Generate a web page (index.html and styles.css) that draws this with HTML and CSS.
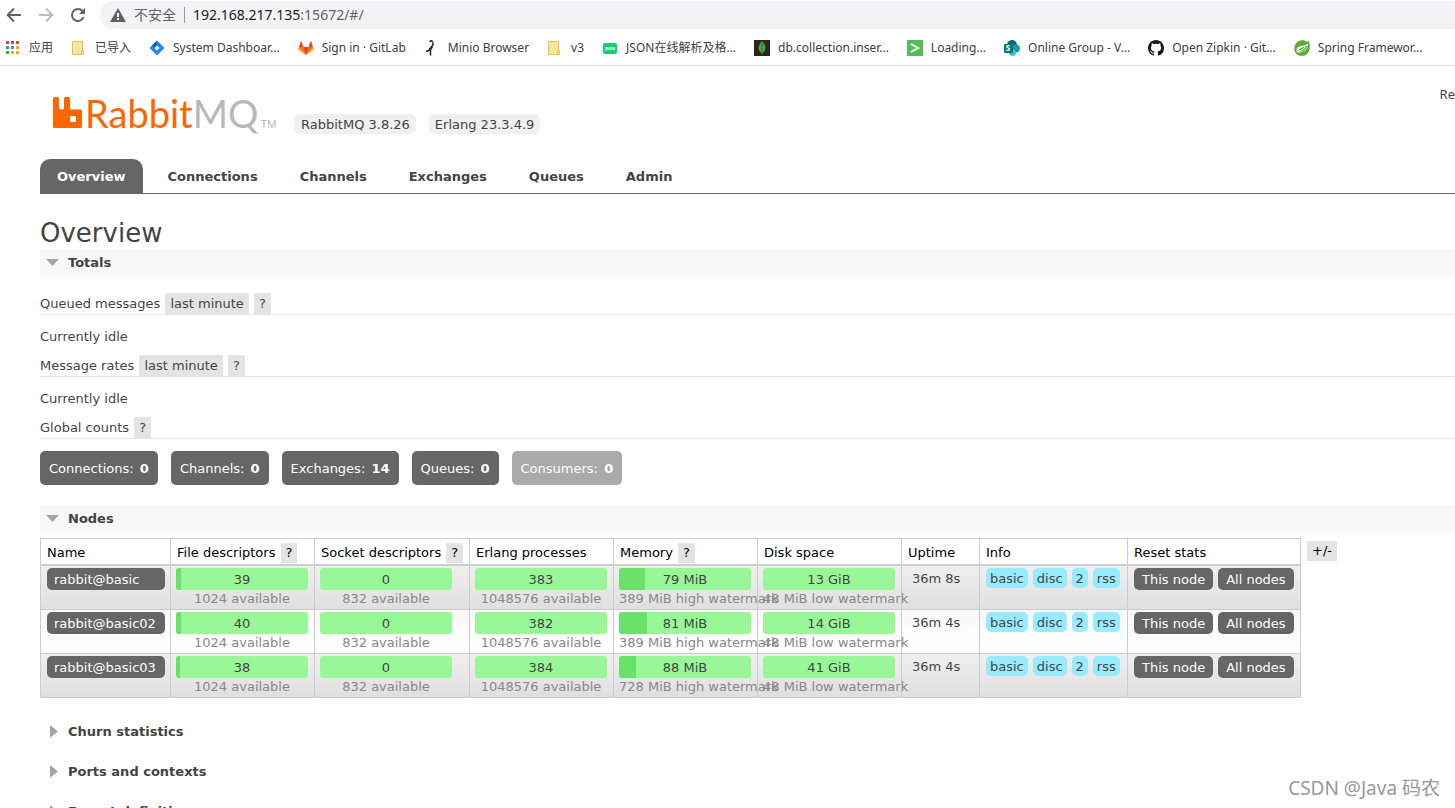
FILE: index.html
```html
<!DOCTYPE html>
<html lang="en">
<head>
    <meta charset="UTF-8">
    <meta name="viewport" content="width=device-width, initial-scale=1.0">
    <title>RabbitMQ Management</title>
    <link rel="stylesheet" href="styles.css">
</head>
<body>
    <div class="browser">
        <div class="toolbar">
            <button class="nav-button" aria-label="Back"><svg width="16" height="16" viewBox="0 0 16 16"><path d="M15 8H2M8 1.500L1.700 8L8 14.500" fill="none" stroke="#5f6368" stroke-width="2"/></svg></button>
            <button class="nav-button" aria-label="Forward"><svg width="16" height="16" viewBox="0 0 16 16"><path d="M1 8h13M8 1.500L14.300 8L8 14.500" fill="none" stroke="#babcbe" stroke-width="2"/></svg></button>
            <button class="nav-button" aria-label="Reload"><svg width="16" height="16" viewBox="0 0 16 16"><path d="M13.500 10.200A6 6 0 1 1 12.500 4" fill="none" stroke="#5f6368" stroke-width="2"/><path d="M15 1v6H9z" fill="#5f6368"/></svg></button>
            <div class="address">
                <svg width="16" height="14" viewBox="0 0 16 14"><path d="M8 0l8 14H0z" fill="#5f6368"/><path d="M7 5h2v4H7zM7 10h2v2H7z" fill="#f1f3f4"/></svg>
                <span class="insecure">不安全</span>
                <span class="url">192.168.217.135<span class="port">:15672/#/</span></span>
            </div>
        </div>
        <div class="bookmarks">
            <a class="bookmark" href="#"><svg width="16" height="16" viewBox="0 0 16 16"><path d="M1 1h3v3H1zM6 1h3v3H6zM11 1h3v3h-3z" fill="#ea4335"/><path d="M1 6h3v3H1zM1 11h3v3H1z" fill="#34a853"/><path d="M6 6h3v3H6z" fill="#4285f4"/><path d="M11 6h3v3h-3zM6 11h3v3H6zM11 11h3v3h-3z" fill="#fbab05"/></svg>应用</a>
            <a class="bookmark" href="#"><svg width="16" height="16" viewBox="0 0 16 16"><path d="M1.500 1.500h10v9h1v4h-11z" fill="#ffe594" stroke="#e8c252"/><path d="M10.500 14v-3.500h1" fill="none" stroke="#e8c252"/></svg>已导入</a>
            <a class="bookmark" href="#"><svg width="16" height="16" viewBox="0 0 16 16"><path d="M8 0.500L15.500 8L8 15.500L.5 8z" fill="#2684ff"/><path d="M8 .5v5L5.500 8L3 5.500z" fill="#0b5cd8"/><path d="M8 5.500L10.500 8L8 10.500L5.500 8z" fill="#fff"/></svg>System Dashboar...</a>
            <a class="bookmark" href="#"><svg width="16" height="16" viewBox="0 0 16 16"><path d="M8 15L.3 9.200L3 1l2.300 6h5.400L13 1l2.700 8.200z" fill="#fc6d26"/><path d="M8 15L5.300 7h5.400z" fill="#e24329"/><path d="M3 1L1.300 7h4zM13 1l1.700 6h-4z" fill="#e24329"/><path d="M8 15L.3 9.200L1.300 7zM8 15l7.700-5.800l-1-2.200z" fill="#fca326"/></svg>Sign in · GitLab</a>
            <a class="bookmark" href="#"><svg width="16" height="16" viewBox="0 0 16 16"><path d="M6 2C6 0 9 .5 8.500 2.500L9 5L5 9.500M8.500 7L6 10L2 11.500M6.500 9.500V15.500" fill="none" stroke="#222" stroke-width="1.500"/><path d="M8.500 1l1.500 4" fill="none" stroke="#d98272"/></svg>Minio Browser</a>
            <a class="bookmark" href="#"><svg width="16" height="16" viewBox="0 0 16 16"><path d="M1.500 1.500h10v9h1v4h-11z" fill="#ffe594" stroke="#e8c252"/><path d="M10.500 14v-3.500h1" fill="none" stroke="#e8c252"/></svg>v3</a>
            <a class="bookmark" href="#"><svg width="16" height="16" viewBox="0 0 16 16"><rect x="1" y="3" width="14" height="11" rx="2" fill="#16ce70"/><text class="json-mark" x="8" y="10" text-anchor="middle">JSON</text></svg>JSON在线解析及格...</a>
            <a class="bookmark" href="#"><svg width="16" height="16" viewBox="0 0 16 16"><path d="M0 0h16v16H0z" fill="#35231b"/><path d="M8 1C3 6 4 11 8 13.500C12 11 13 6 8 1z" fill="#3fa94b"/><path d="M8 1v14" stroke="#1d7134"/></svg>db.collection.inser...</a>
            <a class="bookmark" href="#"><svg width="16" height="16" viewBox="0 0 16 16"><path d="M0 0h16v16H0z" fill="#57bd5a"/><path d="M4 4l7 4l-7 4" fill="none" stroke="#fff" stroke-width="2"/></svg>Loading...</a>
            <a class="bookmark" href="#"><svg width="16" height="16" viewBox="0 0 16 16"><circle cx="8" cy="5" r="5" fill="#036c70"/><circle cx="12" cy="8.500" r="4" fill="#1a9ba1"/><circle cx="8.500" cy="12.500" r="3.500" fill="#37c6d0"/><rect y="4" width="9" height="9" rx="1" fill="#03787c"/><text class="share-mark" x="4" y="11" text-anchor="middle">S</text></svg>Online Group - V...</a>
            <a class="bookmark" href="#"><svg width="16" height="16" viewBox="0 0 16 16"><path fill="#191717" d="M8 0C3.580 0 0 3.580 0 8c0 3.540 2.290 6.530 5.470 7.590.4.070.55-.17.55-.38v-1.490c-2.010.37-2.530-.49-2.690-.94-.09-.23-.48-.94-.82-1.130-.28-.15-.68-.52-.01-.53.63-.01 1.080.58 1.230.82.72 1.210 1.870.87 2.330.66.07-.52.28-.87.51-1.070-1.780-.2-3.640-.89-3.640-3.950 0-.87.31-1.590.82-2.150-.08-.2-.36-1.020.08-2.120 0 0 .67-.21 2.200.82a7.400 7.400 0 0 1 4 0c1.530-1.040 2.200-.82 2.200-.82.44 1.100.16 1.920.08 2.120.51.56.82 1.270.82 2.150 0 3.070-1.870 3.750-3.650 3.950.29.25.54.73.54 1.480v2.200c0 .21.15.46.55.38A8 8 0 0 0 16 8c0-4.420-3.580-8-8-8z"/></svg>Open Zipkin · Git...</a>
            <a class="bookmark" href="#"><svg width="16" height="16" viewBox="0 0 16 16"><path d="M14.500 0.500C17 6 16 12 12.500 14.500C9 17 4 16 2 13.500C-1 10 0 4 4 1.500C7-.5 11 0 13 2z" fill="#5fad36"/><path d="M14 3.500C11 7 3 4.500 2.500 10C2.500 11 3 12 3.500 12.500C9 12.500 14 10 14 3.500z" fill="#fff"/><path d="M13.500 5C11 8 5.500 6.500 4 11.500C9 12 12.500 10 13.500 5z" fill="#5fad36"/><path d="M4 11.500C7 10.500 10 9 11.500 7" fill="none" stroke="#fff"/></svg>Spring Framewor...</a>
        </div>
    </div>

    <div class="header">
        <div class="logo">
            <svg width="30" height="32" viewBox="0 0 30 32"><path d="M1.500 0H4.500q1.500 0 1.500 1.500V11q0 1.500 1.500 1.500h2q1.500 0 1.500-1.500V1.500Q11 0 12.500 0H15.500q1.500 0 1.500 1.500V11q0 1.500 1.500 1.500h9Q29 12.500 29 14v15.500q0 1.500-1.500 1.500h-26Q0 31 0 29.500v-28Q0 0 1.500 0z" fill="#f60"/><rect x="17" y="19" width="6" height="6" rx="1.500" fill="#fff"/></svg>
            <span class="logo-text">Rabbit<span class="logo-mq">MQ</span></span>
            <span class="logo-tm">TM</span>
        </div>
        <div class="versions">
            <span class="version">RabbitMQ 3.8.26</span>
            <span class="version">Erlang 23.3.4.9</span>
        </div>
        <div class="refresh">Re</div>
    </div>

    <div class="menu">
        <a class="tab selected" href="#">Overview</a>
        <a class="tab" href="#">Connections</a>
        <a class="tab" href="#">Channels</a>
        <a class="tab" href="#">Exchanges</a>
        <a class="tab" href="#">Queues</a>
        <a class="tab" href="#">Admin</a>
    </div>

    <div class="main">
        <h1>Overview</h1>
        <h2 class="section open"><svg width="13" height="7" viewBox="0 0 13 7"><path d="M0 0h13L6.500 7z" fill="#a5a5a5"/></svg>Totals</h2>
        <div class="totals">
            <h3>Queued messages <button class="popup">last minute</button> <button class="popup">?</button></h3>
            <p class="idle">Currently idle</p>
            <h3>Message rates <button class="popup">last minute</button> <button class="popup">?</button></h3>
            <p class="idle">Currently idle</p>
            <h3>Global counts <button class="popup">?</button></h3>
            <div class="counts">
                <a class="count" href="#">Connections: <b>0</b></a>
                <a class="count" href="#">Channels: <b>0</b></a>
                <a class="count" href="#">Exchanges: <b>14</b></a>
                <a class="count" href="#">Queues: <b>0</b></a>
                <span class="count disabled">Consumers: <b>0</b></span>
            </div>
        </div>

        <h2 class="section open"><svg width="13" height="7" viewBox="0 0 13 7"><path d="M0 0h13L6.500 7z" fill="#a5a5a5"/></svg>Nodes</h2>
        <div class="nodes">
            <table class="list">
                <colgroup>
                    <col class="col-name"><col class="col-bar"><col class="col-socket"><col class="col-bar"><col class="col-bar"><col class="col-bar"><col class="col-uptime"><col class="col-info"><col class="col-reset">
                </colgroup>
                <thead>
                    <tr>
                        <th>Name</th>
                        <th>File descriptors <button class="popup">?</button></th>
                        <th>Socket descriptors <button class="popup">?</button></th>
                        <th>Erlang processes</th>
                        <th>Memory <button class="popup">?</button></th>
                        <th>Disk space</th>
                        <th>Uptime</th>
                        <th>Info</th>
                        <th>Reset stats</th>
                    </tr>
                </thead>
                <tbody>
                    <tr>
                        <td><a class="node" href="#">rabbit@basic</a></td>
                        <td><div class="bar"><div class="fill" style="width: 4%"></div><span>39</span></div><div class="sub">1024 available</div></td>
                        <td><div class="bar"><span>0</span></div><div class="sub">832 available</div></td>
                        <td><div class="bar"><span>383</span></div><div class="sub">1048576 available</div></td>
                        <td><div class="bar"><div class="fill" style="width: 20%"></div><span>79 MiB</span></div><div class="sub">389 MiB high watermark</div></td>
                        <td><div class="bar"><span>13 GiB</span></div><div class="sub">48 MiB low watermark</div></td>
                        <td class="uptime">36m 8s</td>
                        <td><div class="group"><span class="info">basic</span><span class="info">disc</span><span class="info">2</span><span class="info">rss</span></div></td>
                        <td><div class="group"><button class="reset">This node</button><button class="reset">All nodes</button></div></td>
                    </tr>
                    <tr class="alt">
                        <td><a class="node" href="#">rabbit@basic02</a></td>
                        <td><div class="bar"><div class="fill" style="width: 4%"></div><span>40</span></div><div class="sub">1024 available</div></td>
                        <td><div class="bar"><span>0</span></div><div class="sub">832 available</div></td>
                        <td><div class="bar"><span>382</span></div><div class="sub">1048576 available</div></td>
                        <td><div class="bar"><div class="fill" style="width: 21%"></div><span>81 MiB</span></div><div class="sub">389 MiB high watermark</div></td>
                        <td><div class="bar"><span>14 GiB</span></div><div class="sub">48 MiB low watermark</div></td>
                        <td class="uptime">36m 4s</td>
                        <td><div class="group"><span class="info">basic</span><span class="info">disc</span><span class="info">2</span><span class="info">rss</span></div></td>
                        <td><div class="group"><button class="reset">This node</button><button class="reset">All nodes</button></div></td>
                    </tr>
                    <tr>
                        <td><a class="node" href="#">rabbit@basic03</a></td>
                        <td><div class="bar"><div class="fill" style="width: 3%"></div><span>38</span></div><div class="sub">1024 available</div></td>
                        <td><div class="bar"><span>0</span></div><div class="sub">832 available</div></td>
                        <td><div class="bar"><span>384</span></div><div class="sub">1048576 available</div></td>
                        <td><div class="bar"><div class="fill" style="width: 13%"></div><span>88 MiB</span></div><div class="sub">728 MiB high watermark</div></td>
                        <td><div class="bar"><span>41 GiB</span></div><div class="sub">48 MiB low watermark</div></td>
                        <td class="uptime">36m 4s</td>
                        <td><div class="group"><span class="info">basic</span><span class="info">disc</span><span class="info">2</span><span class="info">rss</span></div></td>
                        <td><div class="group"><button class="reset">This node</button><button class="reset">All nodes</button></div></td>
                    </tr>
                </tbody>
            </table>
            <button class="popup columns">+/-</button>
        </div>

        <div class="closed-sections">
            <h2 class="section"><svg width="13" height="15" viewBox="0 0 13 15"><path d="M4 0l8 6.500L4 13z" fill="#a5a5a5"/></svg>Churn statistics</h2>
            <h2 class="section"><svg width="13" height="15" viewBox="0 0 13 15"><path d="M4 0l8 6.500L4 13z" fill="#a5a5a5"/></svg>Ports and contexts</h2>
            <h2 class="section"><svg width="13" height="15" viewBox="0 0 13 15"><path d="M4 0l8 6.500L4 13z" fill="#a5a5a5"/></svg>Export definitions</h2>
        </div>
    </div>
    <div class="watermark">CSDN @Java 码农</div>
</body>
</html>
```
FILE: styles.css
```css
* {
    box-sizing: border-box;
}
body {
    margin: 0;
    height: 100vh;
    overflow: hidden;
    position: relative;
    background: #fff;
    color: #444;
    font-family: "DejaVu Sans", "Noto Sans CJK SC", sans-serif;
    font-size: 13px;
    line-height: 20px;
}
button {
    font: inherit;
    color: inherit;
    border: none;
    padding: 0;
    cursor: pointer;
}
a {
    color: inherit;
    text-decoration: none;
}
svg {
    flex: none;
    display: block;
}

/* browser chrome */
.browser {
    font-family: "Noto Sans", "Noto Sans CJK SC", sans-serif;
    border-bottom: 1px solid #d9dbde;
}
.toolbar {
    display: flex;
    align-items: center;
    gap: 16px;
    height: 29px;
    padding: 1px 0 0 6px;
}
.nav-button {
    background: transparent;
}
.address {
    flex: 1;
    display: flex;
    align-items: center;
    gap: 8px;
    height: 28px;
    margin-left: -2px;
    padding-left: 10px;
    border-radius: 14px 0 0 14px;
    background: #f1f3f4;
    font-size: 14px;
}
.insecure {
    color: #5f6368;
    line-height: 16px;
    padding-right: 8px;
    border-right: 1px solid #9aa0a6;
}
.url {
    color: #202124;
}
.port {
    color: #5f6368;
}
.bookmarks {
    display: flex;
    gap: 18px;
    height: 36px;
    padding: 1px 0 0 5px;
    font-size: 12px;
    color: #3c4043;
}
.bookmark {
    display: flex;
    align-items: center;
    gap: 8px;
    white-space: nowrap;
}
.json-mark {
    font-size: 4px;
    font-weight: bold;
    fill: #fff;
}
.share-mark {
    font-size: 8px;
    font-weight: bold;
    fill: #fff;
}

/* header */
.header {
    display: flex;
    align-items: flex-start;
    height: 93px;
    padding-left: 53px;
}
.logo {
    display: flex;
    align-items: flex-start;
    width: 242px;
    padding-top: 31px;
    color: #f60;
}
.logo-text {
    font-family: Lato, sans-serif;
    font-size: 38px;
    line-height: 32px;
    margin-left: 2px;
}
.logo-mq {
    color: #b8b8b8;
}
.logo-tm {
    font-family: "Liberation Sans", sans-serif;
    font-size: 11px;
    line-height: 12px;
    color: #b8b8b8;
    margin: 21px 0 0 2px;
}
.versions {
    display: flex;
    gap: 13px;
    padding-top: 48px;
}
.version {
    padding: 1px 6px 0;
    line-height: 19px;
    border-radius: 5px;
    background: #f0f0f0;
}
.refresh {
    margin-left: auto;
    padding-top: 18px;
    font-family: "Noto Sans", sans-serif;
}

.menu {
    display: flex;
    gap: 8px;
    height: 35px;
    margin-left: 40px;
    border-bottom: 1px solid #666;
    font-weight: bold;
}
.tab {
    padding: 8px 17px 6px;
}
.tab.selected {
    background: #666;
    color: #fff;
    border-radius: 10px 10px 0 0;
}

/* content */
.main {
    padding: 22px 0 0 40px;
}
h1 {
    margin: 0;
    padding-top: 2px;
    font-size: 26px;
    font-weight: normal;
    line-height: 31px;
}
.section {
    display: flex;
    align-items: center;
    gap: 9px;
    height: 27px;
    margin: 0;
    padding-left: 6px;
    font-size: 13px;
}
.section.open {
    background: #f8f8f8;
}
.totals {
    padding: 17px 0 20px;
}
h3 {
    margin: 0 0 12px;
    font-size: 13px;
    font-weight: normal;
    line-height: 21px;
    border-bottom: 1px solid #e4e4e4;
}
.popup {
    margin-left: 1px;
    padding: 0 5px;
    background: #e4e4e4;
    vertical-align: top;
}
.idle {
    margin: 0 0 8px;
}
.counts {
    display: flex;
    gap: 13px;
}
.count {
    padding: 8px 9px 6px;
    border-radius: 5px;
    background: #666;
    color: #fff;
}
.count b {
    margin-left: 2px;
}
.count.disabled {
    background: #aaa;
}

.nodes {
    display: flex;
    align-items: flex-start;
    gap: 6px;
    padding-top: 6px;
}
.list {
    table-layout: fixed;
    width: 1261px;
    border-collapse: collapse;
}
.col-name {
    width: 130px;
}
.col-bar {
    width: 144px;
}
.col-socket {
    width: 155px;
}
.col-uptime {
    width: 78px;
}
.col-info {
    width: 148px;
}
.col-reset {
    width: 173px;
}
.list th {
    height: 26px;
    padding: 4px 5px 0 6px;
    border: 1px solid #ccc;
    border-bottom: 2px solid #ccc;
    color: #000;
    font-weight: normal;
    text-align: left;
    white-space: nowrap;
}
.list td {
    height: 44px;
    padding: 2px 5px 1px;
    border: 1px solid #ccc;
    vertical-align: top;
    white-space: nowrap;
}
.list tbody tr {
    background: linear-gradient(#f0f0f0, #dfdfdf);
}
.list tbody .alt {
    background: linear-gradient(#f8f8f8, #fff);
}
.node {
    display: block;
    margin-left: 1px;
    padding: 2px 7px 0;
    border-radius: 5px;
    background: #666;
    color: #fff;
}
.bar {
    display: flex;
    justify-content: center;
    position: relative;
    width: 132px;
    height: 22px;
    padding-top: 2px;
    line-height: 20px;
    border-radius: 3px;
    background: #98f898;
    overflow: hidden;
}
.bar span {
    position: relative;
}
.fill {
    position: absolute;
    inset: 0 auto 0 0;
    background: #6ae26a;
}
.sub {
    width: 132px;
    line-height: 18px;
    color: #888;
    text-align: center;
}
.list .uptime {
    padding: 3px 5px 0 10px;
}
.group {
    display: flex;
    align-items: flex-start;
    gap: 5px;
    padding-left: 1px;
}
.info {
    padding: 1px 4px 0;
    line-height: 19px;
    border-radius: 5px;
    background: #99ebff;
}
.reset {
    padding: 2px 8px 0;
    border-radius: 5px;
    background: #666;
    color: #fff;
}
.columns {
    margin: 3px 0 0;
    color: #000;
}
.closed-sections {
    display: grid;
    gap: 13px;
    padding-top: 21px;
}
.watermark {
    position: absolute;
    right: 15px;
    bottom: 8px;
    font-family: "Noto Sans", "Noto Sans CJK SC", sans-serif;
    font-size: 19px;
    line-height: 24px;
    color: #999;
}
```
